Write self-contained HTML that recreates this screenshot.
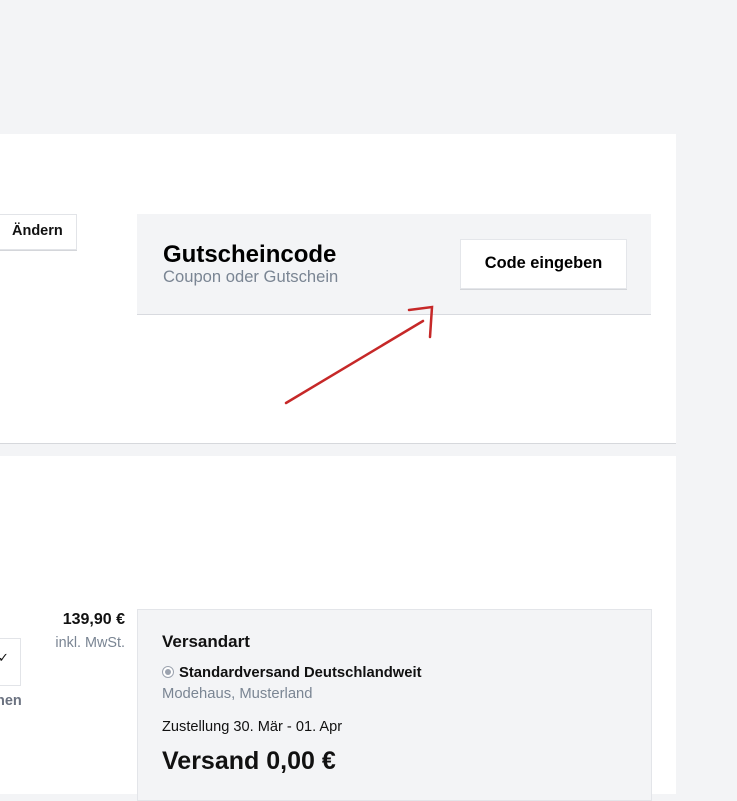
<!DOCTYPE html>
<html><head><meta charset="utf-8"><style>
body{margin:0;width:737px;height:794px;background:#f3f4f6;position:relative;overflow:hidden;font-family:"Liberation Sans","DejaVu Sans",sans-serif;color:#111}
.p{position:absolute;background:#fff}
.abs{position:absolute;white-space:nowrap}
</style></head><body>
<div class="p" style="left:0;top:134px;width:676px;height:309px;border-bottom:1px solid #d6d8dc"></div>
<div class="p" style="left:0;top:456px;width:676px;height:338px"></div>

<div class="abs" style="left:-2px;top:214px;width:77px;height:34px;background:#fff;border:1px solid #e2e4e8;box-shadow:0 1px 0 #d4d6da"></div>
<div class="abs" style="left:12px;top:223px;font-size:14.5px;font-weight:bold">Ändern</div>

<div class="abs" style="left:137px;top:214px;width:514px;height:100px;background:#f3f4f6;border-bottom:1px solid #d8dadf"></div>
<div class="abs" style="left:163px;top:241px;font-size:24px;font-weight:bold;color:#000">Gutscheincode</div>
<div class="abs" style="left:163px;top:267px;font-size:16.6px;color:#7a8593">Coupon oder Gutschein</div>
<div class="abs" style="left:460px;top:239px;width:165px;height:48px;background:#fff;border:1px solid #e4e6ea;box-shadow:0 1px 0 #d4d6da"></div>
<div class="abs" style="left:460px;top:254px;width:167px;text-align:center;font-size:16.4px;font-weight:bold;color:#000">Code eingeben</div>

<svg class="abs" style="left:0;top:0" width="737" height="794"><g stroke="#c62828" stroke-width="2.5" fill="none" stroke-linecap="round"><path d="M286 403 L423 321"/><path d="M409 310 L432 307 L430 337"/></g></svg>

<div class="abs" style="left:0;top:611px;width:125px;text-align:right;font-size:16px;font-weight:bold">139,90 €</div>
<div class="abs" style="left:0;top:635px;width:125px;text-align:right;font-size:14.4px;color:#7a8593">inkl. MwSt.</div>
<div class="abs" style="left:-2px;top:638px;width:21px;height:46px;background:#fff;border:1px solid #e2e4e8"></div>
<div class="abs" style="left:-2px;top:650px;font-size:13px">✓</div>
<div class="abs" style="left:-4px;top:693px;font-size:14.5px;font-weight:bold;color:#6b7280">hen</div>

<div class="abs" style="left:137px;top:609px;width:513px;height:190px;background:#f3f4f6;border:1px solid #e3e5e9"></div>
<div class="abs" style="left:162px;top:632px;font-size:17px;font-weight:bold">Versandart</div>
<div class="abs" style="left:162px;top:666px;width:10px;height:10px;border-radius:50%;border:1px solid #9ca3af;background:#fff"></div>
<div class="abs" style="left:165px;top:669px;width:6px;height:6px;border-radius:50%;background:#9ca3af"></div>
<div class="abs" style="left:179px;top:665px;font-size:14.8px;font-weight:bold">Standardversand Deutschlandweit</div>
<div class="abs" style="left:162px;top:686px;font-size:14.8px;color:#7a8593">Modehaus, Musterland</div>
<div class="abs" style="left:162px;top:719px;font-size:14.6px">Zustellung 30. Mär - 01. Apr</div>
<div class="abs" style="left:162px;top:747px;font-size:25px;font-weight:bold">Versand 0,00 €</div>
</body></html>
